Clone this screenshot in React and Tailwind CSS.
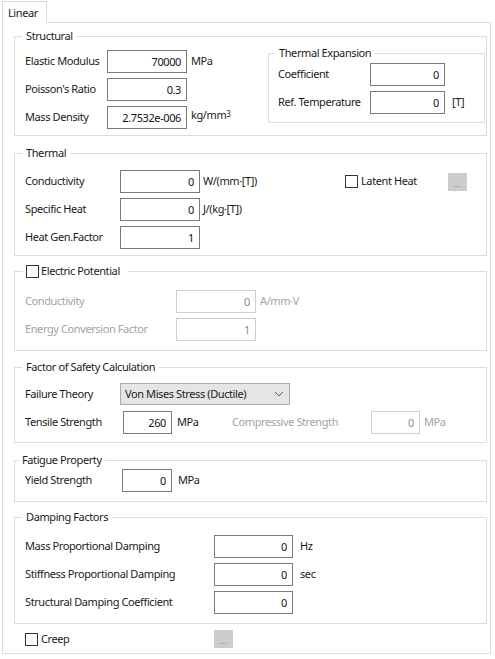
import React from 'react';

const Field = ({ value, w, disabled }) => (
  <input
    readOnly
    value={value}
    className={`h-[23px] ${w} border ${disabled ? 'border-[#cfcfcf] text-[#8d8d8d]' : 'border-[#7a7a7a] text-[#111]'} bg-white pr-[5px] text-right outline-none`}
  />
);

const Check = () => <span className="block h-[13px] w-[13px] shrink-0 border border-[#333] bg-white" />;

const Dots = () => (
  <span className="flex h-[18px] w-[19px] shrink-0 items-end justify-center bg-[#cccccc] pb-[3px] text-[9px] leading-none text-[#8f8f8f]">...</span>
);

const Group = ({ title, className, children }) => (
  <fieldset className={`border border-[#dcdcdc] ${className}`}>
    <legend className="ml-[7px] px-[4px] leading-[14px]">{title}</legend>
    {children}
  </fieldset>
);

const App = () => {
  return (
    <div className="h-[659px] w-[495px] overflow-hidden bg-white pt-[1px] font-['Noto_Sans',sans-serif] text-[11px] tracking-[-0.4px] text-[#1a1a1a]">
      {/* Tab */}
      <div className="ml-[2px] flex">
        <div className="relative z-10 -mb-px h-[22px] w-[45px] border border-b-0 border-[#d9d9d9] bg-white pl-[5px] leading-[21px]">Linear</div>
      </div>

      <div className="ml-[2px] h-[632px] w-[489px] border border-[#dcdcdc] pl-[11px] pr-[3px] pt-[6px]">
        {/* Structural */}
        <Group title="Structural">
          <div className="flex items-start pb-[6px] pl-[10px] pr-[1px] pt-[3px]">
            <div className="flex flex-col gap-[5px] pt-[4px]">
              <div className="flex h-[23px] items-center">
                <span className="w-[82px]">Elastic Modulus</span>
                <Field value="70000" w="w-[80px]" />
                <span className="ml-[4px]">MPa</span>
              </div>
              <div className="flex h-[23px] items-center">
                <span className="w-[82px]">Poisson's Ratio</span>
                <Field value="0.3" w="w-[80px]" />
              </div>
              <div className="flex h-[23px] items-center">
                <span className="w-[82px]">Mass Density</span>
                <Field value="2.7532e-006" w="w-[80px]" />
                <span className="ml-[4px] -mt-[5px]">kg/mm<span className="text-[8px] align-[2px]">3</span></span>
              </div>
            </div>

            <fieldset className="ml-auto w-[217px] border border-[#dcdcdc]">
              <legend className="ml-[6px] px-[4px] leading-[14px]">Thermal Expansion</legend>
              <div className="flex flex-col gap-[5px] pb-[8px] pl-[9px] pt-[3px]">
                <div className="flex h-[23px] items-center">
                  <span className="w-[92px]">Coefficient</span>
                  <Field value="0" w="w-[75px]" />
                </div>
                <div className="flex h-[23px] items-center">
                  <span className="w-[92px]">Ref. Temperature</span>
                  <Field value="0" w="w-[75px]" />
                  <span className="ml-[7px]">[T]</span>
                </div>
              </div>
            </fieldset>
          </div>
        </Group>

        {/* Thermal */}
        <Group title="Thermal" className="mt-[10px]">
          <div className="flex flex-col gap-[5px] pb-[6px] pl-[10px] pt-[10px]">
            <div className="flex h-[23px] items-center">
              <span className="w-[95px]">Conductivity</span>
              <Field value="0" w="w-[80px]" />
              <span className="ml-[3px]">W/(mm·[T])</span>
              <div className="ml-auto mr-[19px] flex items-center">
                <Check />
                <span className="ml-[3px] w-[87px]">Latent Heat</span>
                <Dots />
              </div>
            </div>
            <div className="flex h-[23px] items-center">
              <span className="w-[95px]">Specific Heat</span>
              <Field value="0" w="w-[80px]" />
              <span className="ml-[3px]">J/(kg·[T])</span>
            </div>
            <div className="flex h-[23px] items-center">
              <span className="w-[95px]">Heat Gen.Factor</span>
              <Field value="1" w="w-[80px]" />
            </div>
          </div>
        </Group>

        {/* Electric Potential */}
        <fieldset className="mt-[8px] border border-[#dcdcdc]">
          <legend className="ml-[8px] flex h-[14px] items-center pl-[3px] pr-[8px]">
            <Check />
            <span className="ml-[2px]">Electric Potential</span>
          </legend>
          <div className="flex flex-col gap-[5px] pb-[9px] pl-[10px] pt-[12px] text-[#a3a3a3]">
            <div className="flex h-[23px] items-center">
              <span className="w-[151px]">Conductivity</span>
              <Field value="0" w="w-[80px]" disabled />
              <span className="ml-[4px]">A/mm·V</span>
            </div>
            <div className="flex h-[23px] items-center">
              <span className="w-[151px]">Energy Conversion Factor</span>
              <Field value="1" w="w-[80px]" disabled />
            </div>
          </div>
        </fieldset>

        {/* Factor of Safety */}
        <Group title="Factor of Safety Calculation" className="mt-[9px]">
          <div className="flex flex-col gap-[6px] pb-[8px] pl-[10px] pt-[9px]">
            <div className="flex h-[22px] items-center">
              <span className="w-[95px]">Failure Theory</span>
              <div className="flex h-[22px] w-[170px] items-center justify-between border border-[#adadad] bg-[#e5e5e5] pl-[4px] pr-[5px]">
                <span>Von Mises Stress (Ductile)</span>
                <svg width="10" height="6" viewBox="0 0 10 6" fill="none">
                  <path d="M1 1l4 4 4-4" stroke="#606060" strokeWidth="1" />
                </svg>
              </div>
            </div>
            <div className="flex h-[23px] items-center">
              <span className="w-[98px]">Tensile Strength</span>
              <Field value="260" w="w-[49px]" />
              <span className="ml-[5px] w-[55px]">MPa</span>
              <span className="w-[139px] text-[#a3a3a3]">Compressive Strength</span>
              <Field value="0" w="w-[49px]" disabled />
              <span className="ml-[4px] text-[#a3a3a3]">MPa</span>
            </div>
          </div>
        </Group>

        {/* Fatigue */}
        <fieldset className="mt-[10px] border border-[#dcdcdc]">
          <legend className="ml-[4px] px-[3px] leading-[14px]">Fatigue Property</legend>
          <div className="mb-[9px] mt-[2px] flex h-[23px] items-center pl-[10px]">
            <span className="w-[97px]">Yield Strength</span>
            <Field value="0" w="w-[50px]" />
            <span className="ml-[6px]">MPa</span>
          </div>
        </fieldset>

        {/* Damping */}
        <Group title="Damping Factors" className="mt-[8px]">
          <div className="flex flex-col gap-[5px] pb-[9px] pl-[10px] pt-[11px]">
            <div className="flex h-[23px] items-center">
              <span className="w-[189px]">Mass Proportional Damping</span>
              <Field value="0" w="w-[79px]" />
              <span className="ml-[7px]">Hz</span>
            </div>
            <div className="flex h-[23px] items-center">
              <span className="w-[189px]">Stiffness Proportional Damping</span>
              <Field value="0" w="w-[79px]" />
              <span className="ml-[7px]">sec</span>
            </div>
            <div className="flex h-[23px] items-center">
              <span className="w-[189px]">Structural Damping Coefficient</span>
              <Field value="0" w="w-[79px]" />
            </div>
          </div>
        </Group>

        {/* Creep */}
        <div className="mt-[6px] flex h-[18px] items-center pl-[11px]">
          <div className="flex w-[189px] items-center">
            <Check />
            <span className="ml-[3px]">Creep</span>
          </div>
          <Dots />
        </div>
      </div>
    </div>
  );
};

export default App;
